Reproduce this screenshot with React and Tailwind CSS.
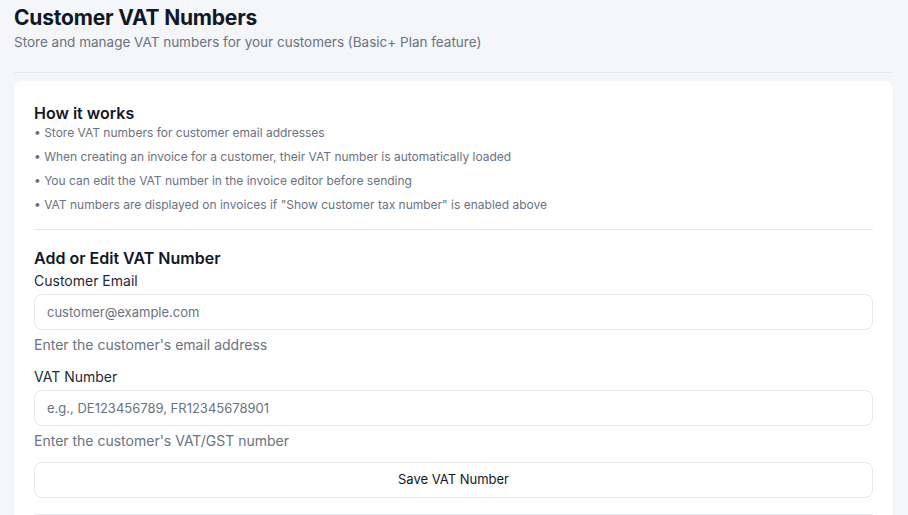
import React, { useState } from 'react';

const tips = [
  'Store VAT numbers for customer email addresses',
  'When creating an invoice for a customer, their VAT number is automatically loaded',
  'You can edit the VAT number in the invoice editor before sending',
  'VAT numbers are displayed on invoices if "Show customer tax number" is enabled above',
];

const App = () => {
  const [email, setEmail] = useState('');
  const [vat, setVat] = useState('');

  return (
    <div className="min-h-screen bg-[#f5f6fa] pl-[14px] pr-[15px] pt-[4px] font-['Inter',sans-serif] text-[#111827]">
      <h1 className="text-[21px] leading-[28px] font-bold tracking-[-0.2px]">Customer VAT Numbers</h1>
      <p className="text-[13.5px] leading-[20px] text-[#6b7280]">
        Store and manage VAT numbers for your customers (Basic+ Plan feature)
      </p>
      <div className="mt-[20px] border-t border-[#e5e7eb]" />

      <div className="mt-[8px] bg-white rounded-lg shadow-[0_1px_3px_rgba(0,0,0,0.06)] px-5 pt-5 pb-4">
        <h2 className="text-[16px] leading-[24px] font-semibold">How it works</h2>
        <ul className="flex flex-col gap-2">
          {tips.map((tip) => (
            <li key={tip} className="text-[12px] leading-[16px] text-[#6b7280]">
              • {tip}
            </li>
          ))}
        </ul>

        <div className="mt-4 border-t border-[#e5e7eb]" />

        <h2 className="mt-[16px] text-[16px] leading-[24px] font-semibold">Add or Edit VAT Number</h2>
        <label className="block mt-[1px] text-[14px] leading-[20px] text-[#1f2937]">Customer Email</label>
        <input
          value={email}
          onChange={(e) => setEmail(e.target.value)}
          placeholder="customer@example.com"
          className="mt-[3px] w-full h-[36px] rounded-lg border border-[#e5e7eb] px-3 text-[13px] placeholder:text-[#6b7280] outline-none"
        />
        <p className="mt-[5px] text-[14px] leading-[20px] text-[#6b7280]">Enter the customer's email address</p>

        <label className="block mt-[12px] text-[14px] leading-[20px] text-[#1f2937]">VAT Number</label>
        <input
          value={vat}
          onChange={(e) => setVat(e.target.value)}
          placeholder="e.g., DE123456789, FR12345678901"
          className="mt-[3px] w-full h-[36px] rounded-lg border border-[#e5e7eb] px-3 text-[13px] placeholder:text-[#6b7280] outline-none"
        />
        <p className="mt-[5px] text-[14px] leading-[20px] text-[#6b7280]">Enter the customer's VAT/GST number</p>

        <button className="mt-[11px] w-full h-[36px] rounded-lg border border-[#e5e7eb] bg-white text-[13px] text-[#111827]">
          Save VAT Number
        </button>

        <div className="mt-4 border-t border-[#e5e7eb]" />
      </div>
    </div>
  );
};

export default App;
